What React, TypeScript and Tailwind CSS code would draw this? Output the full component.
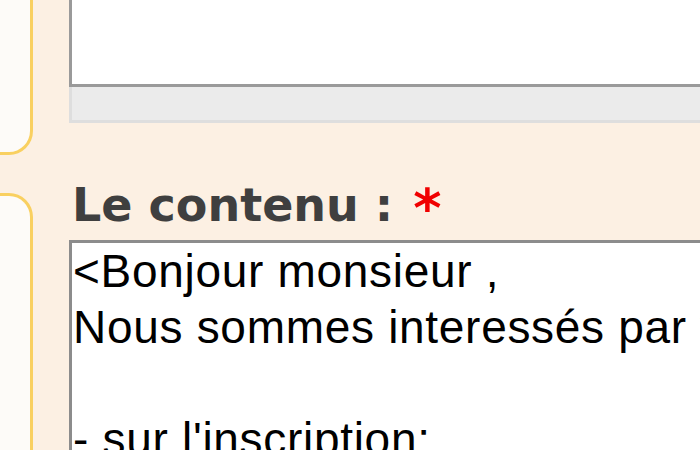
import React from "react";

export default function App() {
  return (
    <div
      className="w-[700px] h-[450px] overflow-hidden bg-[#fcf0e3] flex"
      style={{ fontFamily: '"Liberation Sans", Arial, sans-serif' }}
    >
      {/* left column */}
      <div className="w-[33px] shrink-0 flex flex-col">
        <div className="h-[155px] shrink-0 bg-[#fdfbf8] border-r-[3px] border-b-[3px] border-[#f9d060] rounded-br-[24px]" />
        <div className="mt-[38px] flex-1 bg-[#fdfbf8] border-r-[3px] border-t-[3px] border-[#f9d060] rounded-tr-[24px]" />
      </div>

      {/* main column */}
      <div className="ml-[36px] flex-1 flex flex-col min-w-0">
        <div className="h-[87px] shrink-0 bg-white border-l-[3px] border-b-[3px] border-[#9a9a9a]" />
        <div className="h-[36px] shrink-0 bg-[#ebebeb] border-l-[3px] border-b-[3px] border-[#dedede]" />
        <div
          className="mt-[56px] h-[52px] shrink-0 leading-[52px] pl-[3px] text-[46px] font-bold text-[#3f3f3f] whitespace-nowrap"
          style={{ fontFamily: '"DejaVu Sans", Verdana, sans-serif' }}
        >
          Le contenu :{" "}
          <span className="text-[#f00000] text-[54px] align-top relative top-[4px] left-[4px]">*</span>
        </div>
        <div className="mt-[9px] flex-1 shrink-0 bg-white border-l-[3px] border-t-[3px] border-[#8c8c8c] pl-[1px] text-[46px] leading-[56px] tracking-[0.7px] text-black whitespace-pre">
          {"<Bonjour monsieur ,\nNous sommes interessés par votre\n\n- sur l'inscription:"}
        </div>
      </div>
    </div>
  );
}
